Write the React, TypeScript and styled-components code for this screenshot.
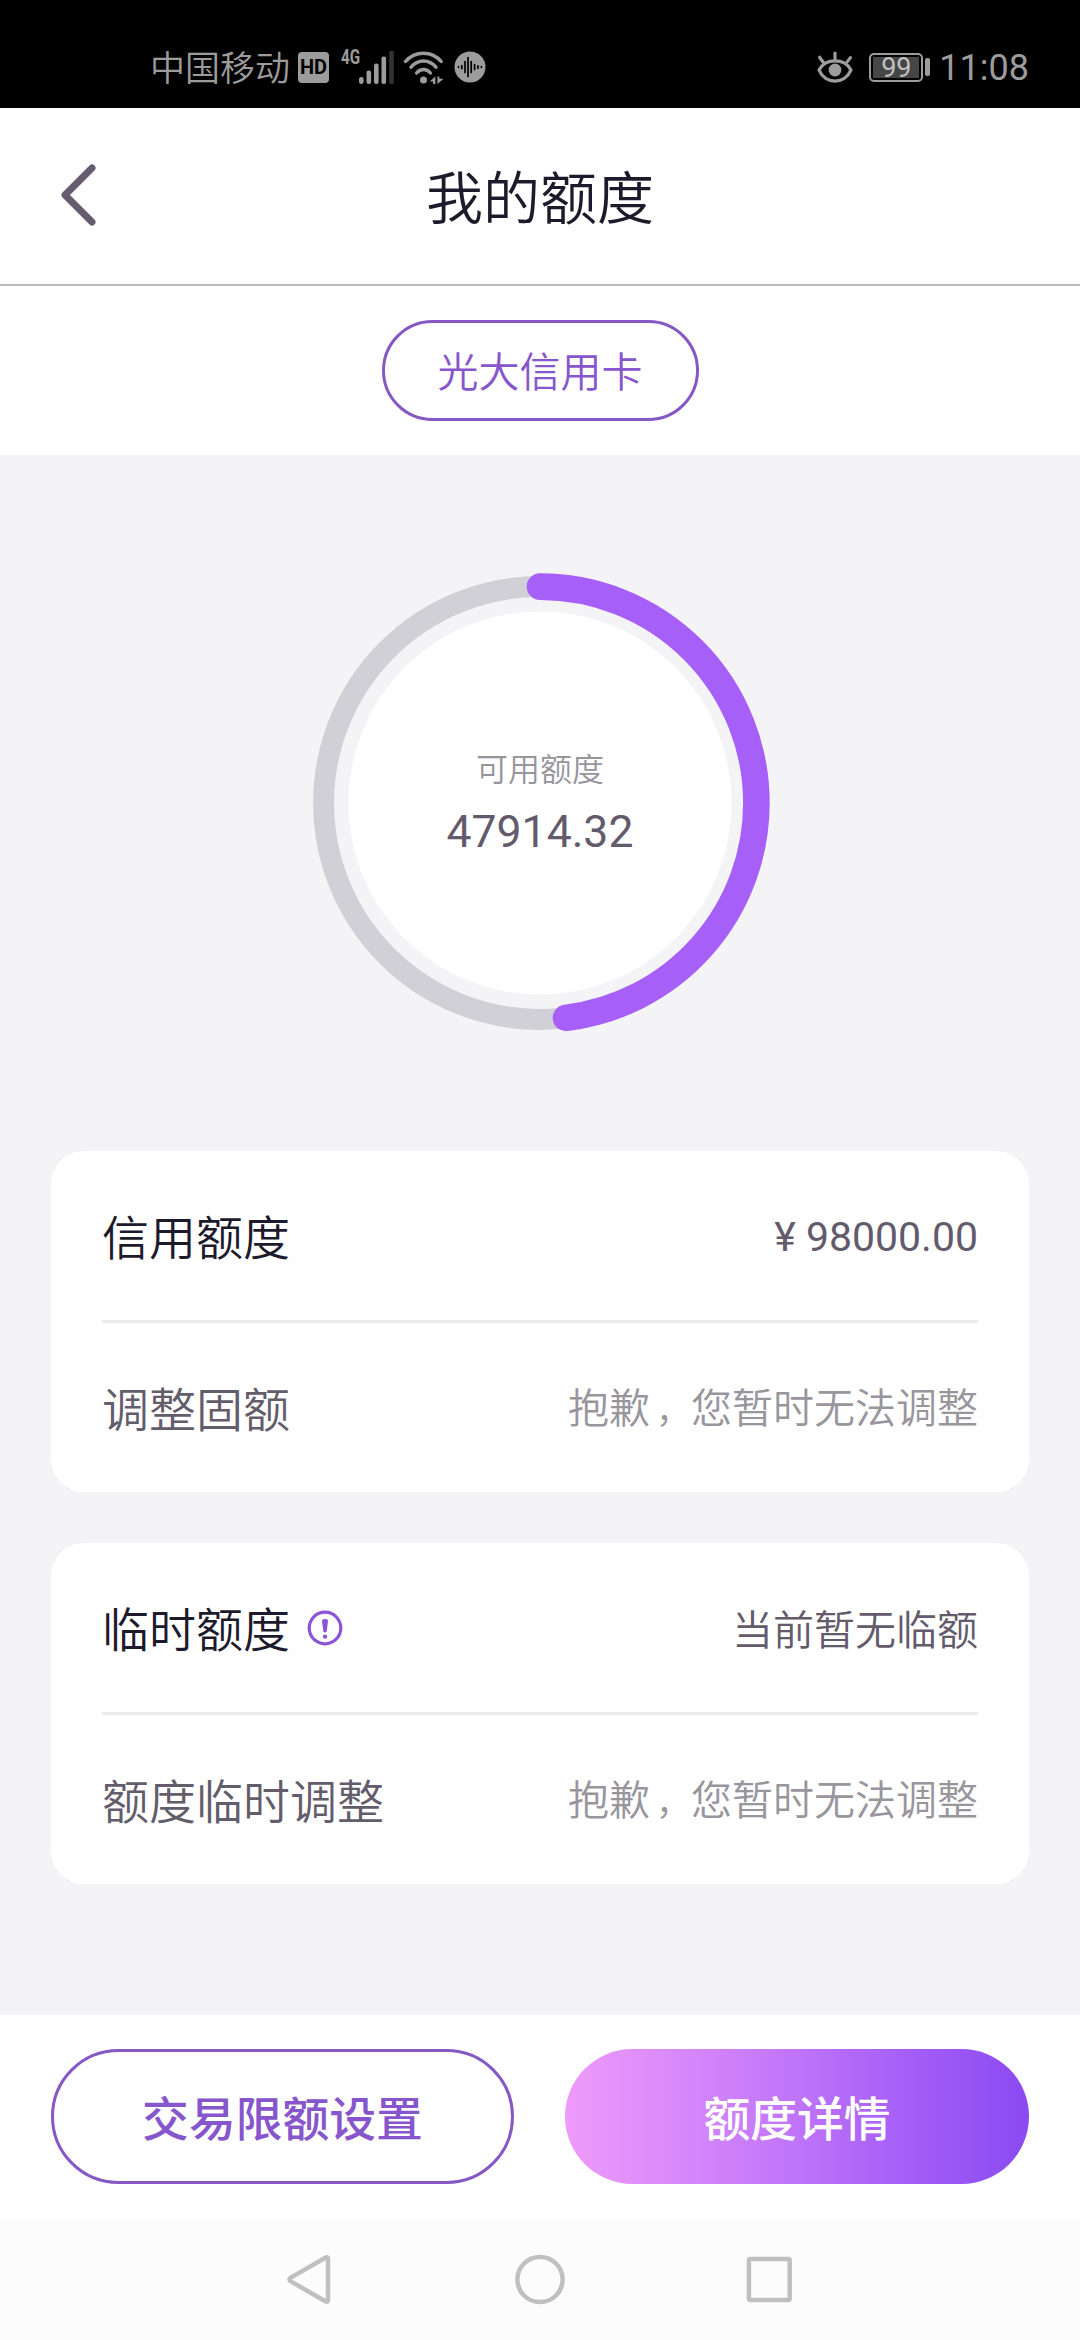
import React from "react";
import styled, { createGlobalStyle } from "styled-components";

const GlobalStyle = createGlobalStyle`
  * { box-sizing: border-box; }
  body { margin: 0; background: #f4f4f7; }
  button { font: inherit; margin: 0; padding: 0; border: 0; background: none; }
`;

const Screen = styled.div`
  width: 1080px;
  height: 2340px;
  display: flex;
  flex-direction: column;
  background: #f4f4f7;
  font-family: Roboto, "Noto Sans CJK SC", sans-serif;
  font-weight: 350;
  overflow: hidden;
  white-space: nowrap;
`;

const StatusBar = styled.div`
  height: 108px;
  flex: none;
  background: #000;
  color: #9c9c9c;
  display: flex;
  align-items: flex-start;
  justify-content: space-between;
  padding: 46px 51px 0 150px;
`;

const StatusGroup = styled.div`
  display: flex;
  align-items: center;
  height: 42px;
`;

const Carrier = styled.span`
  padding-top: 5px;
  font-size: 35px;
  line-height: 42px;
`;

const HdBadge = styled.span`
  width: 31px;
  height: 31px;
  margin-left: 8px;
  border-radius: 4px;
  background: #9c9c9c;
  color: #000;
  font: 700 20px/31px Roboto, sans-serif;
  text-align: center;
`;

const Network = styled.span`
  align-self: flex-start;
  margin: 2px 0 0 12px;
  width: 18px;
  font: 700 20px/18px Roboto, sans-serif;
  transform: scaleX(0.76);
  transform-origin: left;
`;

const StatusIcon = styled.svg<{ $gap?: number }>`
  display: block;
  flex: none;
  margin-left: ${(p) => p.$gap ?? 0}px;
`;

const Battery = styled.span`
  width: 54px;
  height: 29px;
  margin-left: 16px;
  padding: 2px;
  border: 2px solid #9c9c9c;
  border-radius: 5px;
  display: flex;
`;

const BatteryLevel = styled.span`
  flex: 1;
  background: #464646;
  color: #c0c0c0;
  font: 400 27px/22px Roboto, sans-serif;
  text-align: center;
`;

const BatteryCap = styled.span`
  width: 5px;
  height: 18px;
  margin-left: 2px;
  border-radius: 2px;
  background: #9c9c9c;
`;

const Clock = styled.span`
  margin-left: 9px;
  padding-top: 2px;
  font: 400 36px/42px Roboto, sans-serif;
`;

const Header = styled.header`
  height: 178px;
  flex: none;
  display: grid;
  grid-template-columns: 160px 1fr 160px;
  align-items: center;
  background: #fff;
  border-bottom: 2px solid #b9b9b9;
`;

const BackButton = styled.button`
  display: flex;
  padding-left: 61px;
  margin-top: -2px;
`;

const Title = styled.h1`
  margin: 7px 0 0;
  font-size: 57px;
  font-weight: 350;
  line-height: 80px;
  text-align: center;
  color: #1d1a2b;
`;

const CardPicker = styled.div`
  height: 169px;
  flex: none;
  display: flex;
  align-items: center;
  justify-content: center;
  background: #fff;
`;

const CardPill = styled.button`
  width: 317px;
  height: 101px;
  padding-top: 4px;
  border: 3px solid #8558c4;
  border-radius: 51px;
  color: #8756cc;
  font-size: 41px;
  font-weight: 350;
  line-height: 60px;
`;

const Gauge = styled.section`
  height: 696px;
  flex: none;
  display: grid;
  place-items: center;
`;

const GaugeRing = styled.svg`
  grid-area: 1 / 1;
`;

const GaugeText = styled.div`
  grid-area: 1 / 1;
  display: flex;
  flex-direction: column;
  align-items: center;
  margin-top: 3px;
`;

const GaugeLabel = styled.div`
  font-size: 32px;
  line-height: 50px;
  color: #97949c;
`;

const GaugeValue = styled.div`
  margin-top: 5px;
  font-size: 44.5px;
  font-weight: 400;
  line-height: 64px;
  color: #635a6c;
`;

const Cards = styled.main`
  flex: 1;
  display: flex;
  flex-direction: column;
  gap: 51px;
  padding: 0 51px;
`;

const Card = styled.section`
  height: 341px;
  padding: 0 51px;
  border-radius: 33px;
  background: #fff;
`;

const Row = styled.div<{ $divided?: boolean }>`
  height: ${(p) => (p.$divided ? 172 : 169)}px;
  display: flex;
  align-items: center;
  justify-content: space-between;
  border-bottom: ${(p) => (p.$divided ? "3px solid #eaeaea" : "0")};
`;

const Label = styled.div<{ $muted?: boolean }>`
  display: flex;
  align-items: center;
  gap: 17px;
  font-size: 47px;
  line-height: 68px;
  color: ${(p) => (p.$muted ? "#635d6b" : "#1d1a2b")};
`;

const LabelText = styled.span`
  padding-top: 7px;
`;

const Value = styled.span<{ $tone: "strong" | "muted"; $numeric?: boolean }>`
  padding-top: ${(p) => (p.$numeric ? 2 : 6)}px;
  font-size: 41px;
  font-weight: ${(p) => (p.$numeric ? 400 : 350)};
  line-height: 60px;
  color: ${(p) => (p.$tone === "strong" ? "#635a6c" : "#98959d")};
`;

const Comma = styled.span`
  padding-left: 6px;
  font-size: 35px;
`;

const Actions = styled.footer`
  height: 204px;
  flex: none;
  display: grid;
  grid-template-columns: 463px 464px;
  gap: 51px;
  padding: 34px 51px 0;
  background: #fff;
`;

const ActionButton = styled.button<{ $primary?: boolean }>`
  height: 135px;
  padding-top: 7px;
  border-radius: 68px;
  border: ${(p) => (p.$primary ? "0" : "3px solid #8558c4")};
  background: ${(p) =>
    p.$primary
      ? "linear-gradient(90deg, #ef9bfb 0%, #c67af9 43%, #ab63f8 68%, #8a4af2 100%)"
      : "#fff"};
  color: ${(p) => (p.$primary ? "#fff" : "#8756cc")};
  font-size: 46.8px;
  font-weight: 500;
  line-height: 68px;
`;

const NavBar = styled.nav`
  height: 121px;
  flex: none;
  display: flex;
  justify-content: center;
  align-items: center;
  gap: 179px;
  background: #fcfcfc;
`;

const NavIcon = styled.svg`
  display: block;
  fill: none;
  stroke: #c0c0c0;
  stroke-width: 4.5;
  stroke-linejoin: round;
`;

const RING_RADIUS = 216.4;
const RING_LENGTH = 2 * Math.PI * RING_RADIUS;
const USED_RATIO = 0.4806;

const SignalIcon = () => (
  <StatusIcon width="36" height="36" viewBox="0 0 36 36" fill="#9c9c9c">
    <rect x="0" y="28" width="4.6" height="7" rx="2.2" />
    <rect x="7.5" y="21.5" width="4.6" height="13.5" rx="2" />
    <rect x="15" y="14.5" width="4.6" height="20.5" rx="2" />
    <rect x="22.5" y="7.5" width="4.6" height="27.5" rx="2" />
    <rect x="30.2" y="2" width="4.6" height="33" rx="1" fill="#333" />
  </StatusIcon>
);

const WifiIcon = () => (
  <StatusIcon $gap={8} width="42" height="36" viewBox="0 0 42 36" fill="none" stroke="#9c9c9c" strokeWidth="3.4" strokeLinecap="round">
    <path d="M2.5 12.5 C12 1.4 29 1.4 38.2 12.5" />
    <path d="M8 18.2 C15 10 26 10 33 18.2" />
    <path d="M13.6 24 C17.5 19.4 23.5 19.4 27.4 24" />
    <circle cx="20.5" cy="31" r="3.5" fill="#9c9c9c" stroke="none" />
    <path d="M32.4 27.5 V35 H30 V32.4 H26.6 Z M34.4 27.5 H36.4 V29.8 H40.6 L34.4 35 Z" fill="#9c9c9c" stroke="none" />
  </StatusIcon>
);

const VoiceIcon = () => (
  <StatusIcon $gap={9} width="32" height="32" viewBox="0 0 32 32" stroke="#000" strokeWidth="1.7" strokeLinecap="round">
    <circle cx="16" cy="16" r="15.5" fill="#9c9c9c" stroke="none" />
    <path d="M4.5 15.7 V16.3 M7.8 14.5 V17.5 M11 10.5 V21.5 M14 6.5 V25.5 M17.2 10.5 V21.5 M20.6 13.5 V18.5 M24 14.8 V17.2 M27.4 15.7 V16.3" />
  </StatusIcon>
);

const EyeIcon = () => (
  <StatusIcon width="36" height="33" viewBox="0 0 36 33" fill="none" stroke="#9c9c9c" strokeWidth="3.2" strokeLinecap="round">
    <path d="M2 19 C8.5 6.8 27.5 6.8 34 19 C27.5 33.8 8.5 33.8 2 19 Z" strokeLinejoin="round" />
    <circle cx="18" cy="19" r="6.4" fill="#9c9c9c" stroke="none" />
    <path d="M18 2 V8 M2.6 6.2 L6.2 11.2 M33.4 6.6 L29.8 11.4" />
  </StatusIcon>
);

const InfoIcon = () => (
  <StatusIcon width="36" height="36" viewBox="0 0 36 36">
    <circle cx="18" cy="18" r="15.8" fill="none" stroke="#8a55d8" strokeWidth="3.2" />
    <path d="M15 10.8 Q15 9 18 9 Q21 9 21 10.8 L19.7 21.4 Q18 23.4 16.3 21.4 Z" fill="#8a55d8" />
    <circle cx="18" cy="26.6" r="2.2" fill="#8a55d8" />
  </StatusIcon>
);

const Unavailable = () => (
  <Value $tone="muted">
    抱歉<Comma>，</Comma>您暂时无法调整
  </Value>
);

export default function App() {
  return (
    <Screen>
      <GlobalStyle />
      <StatusBar>
        <StatusGroup>
          <Carrier>中国移动</Carrier>
          <HdBadge>HD</HdBadge>
          <Network>4G</Network>
          <SignalIcon />
          <WifiIcon />
          <VoiceIcon />
        </StatusGroup>
        <StatusGroup>
          <EyeIcon />
          <Battery>
            <BatteryLevel>99</BatteryLevel>
          </Battery>
          <BatteryCap />
          <Clock>11:08</Clock>
        </StatusGroup>
      </StatusBar>

      <Header>
        <BackButton aria-label="返回">
          <svg width="36" height="62" viewBox="0 0 36 62" fill="none" stroke="#665c6e" strokeWidth="7" strokeLinecap="round" strokeLinejoin="round">
            <path d="M31 4 L4 31 L31 58" />
          </svg>
        </BackButton>
        <Title>我的额度</Title>
      </Header>

      <CardPicker>
        <CardPill>光大信用卡</CardPill>
      </CardPicker>

      <Gauge>
        <GaugeRing width="460" height="460" viewBox="-230 -230 460 460" fill="none">
          <circle r={RING_RADIUS} stroke="#d2d0d7" strokeWidth="21" />
          <circle
            r={RING_RADIUS}
            stroke="#a760f7"
            strokeWidth="26.6"
            strokeLinecap="round"
            strokeDasharray={`${RING_LENGTH * USED_RATIO} ${RING_LENGTH}`}
            transform="rotate(-90)"
          />
          <circle r="191.5" fill="#fff" />
        </GaugeRing>
        <GaugeText>
          <GaugeLabel>可用额度</GaugeLabel>
          <GaugeValue>47914.32</GaugeValue>
        </GaugeText>
      </Gauge>

      <Cards>
        <Card>
          <Row $divided>
            <Label>
              <LabelText>信用额度</LabelText>
            </Label>
            <Value $tone="strong" $numeric>¥ 98000.00</Value>
          </Row>
          <Row>
            <Label $muted>
              <LabelText>调整固额</LabelText>
            </Label>
            <Unavailable />
          </Row>
        </Card>
        <Card>
          <Row $divided>
            <Label>
              <LabelText>临时额度</LabelText>
              <InfoIcon />
            </Label>
            <Value $tone="strong">当前暂无临额</Value>
          </Row>
          <Row>
            <Label $muted>
              <LabelText>额度临时调整</LabelText>
            </Label>
            <Unavailable />
          </Row>
        </Card>
      </Cards>

      <Actions>
        <ActionButton>交易限额设置</ActionButton>
        <ActionButton $primary>额度详情</ActionButton>
      </Actions>

      <NavBar>
        <NavIcon width="50" height="52" viewBox="0 0 50 52">
          <path d="M43 5 Q43 2.2 40.4 3.7 L5.8 23.6 Q3 25.5 5.8 27.4 L40.4 47.3 Q43 48.8 43 46 Z" />
        </NavIcon>
        <NavIcon width="52" height="52" viewBox="0 0 52 52">
          <circle cx="26" cy="25.5" r="22.6" />
        </NavIcon>
        <NavIcon width="50" height="52" viewBox="0 0 50 52">
          <rect x="3.9" y="5" width="40.8" height="41" rx="1.5" />
        </NavIcon>
      </NavBar>
    </Screen>
  );
}
